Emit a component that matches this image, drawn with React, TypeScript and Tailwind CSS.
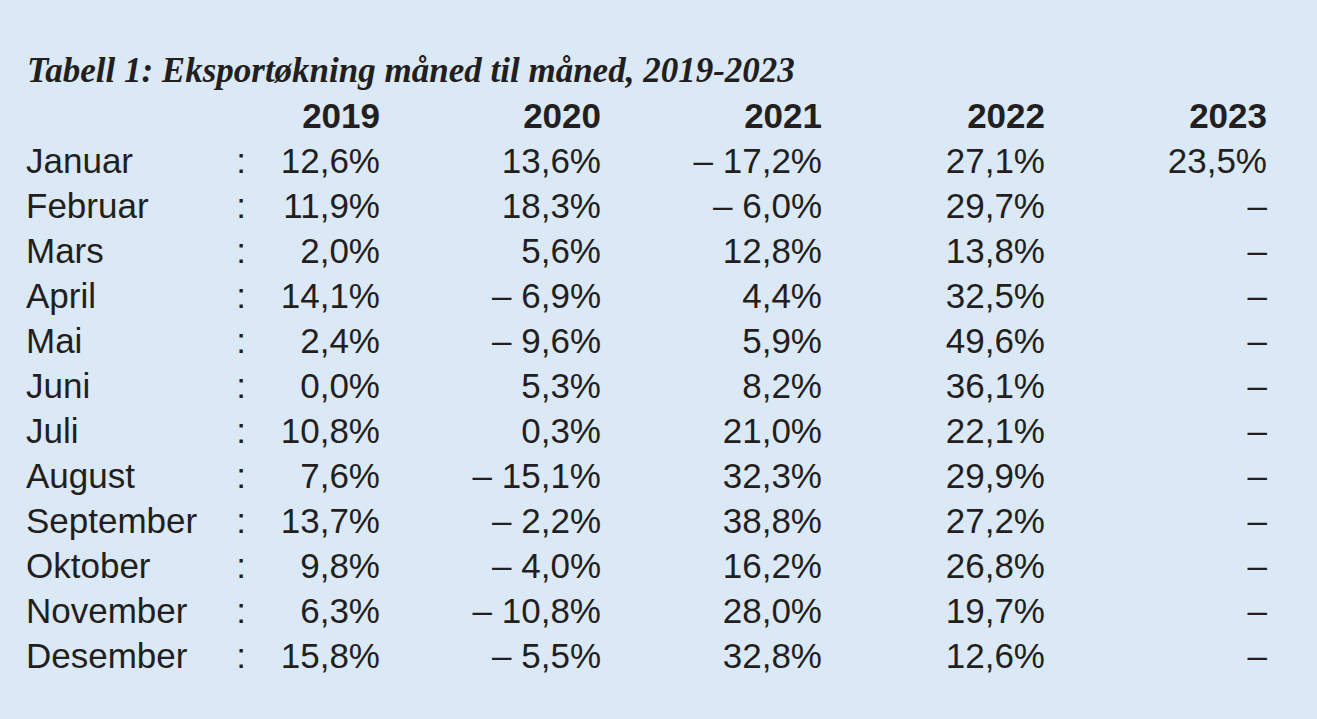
import React from "react";

const rows: [string, string, string, string, string, string][] = [
  ["Januar", "12,6%", "13,6%", "– 17,2%", "27,1%", "23,5%"],
  ["Februar", "11,9%", "18,3%", "– 6,0%", "29,7%", "–"],
  ["Mars", "2,0%", "5,6%", "12,8%", "13,8%", "–"],
  ["April", "14,1%", "– 6,9%", "4,4%", "32,5%", "–"],
  ["Mai", "2,4%", "– 9,6%", "5,9%", "49,6%", "–"],
  ["Juni", "0,0%", "5,3%", "8,2%", "36,1%", "–"],
  ["Juli", "10,8%", "0,3%", "21,0%", "22,1%", "–"],
  ["August", "7,6%", "– 15,1%", "32,3%", "29,9%", "–"],
  ["September", "13,7%", "– 2,2%", "38,8%", "27,2%", "–"],
  ["Oktober", "9,8%", "– 4,0%", "16,2%", "26,8%", "–"],
  ["November", "6,3%", "– 10,8%", "28,0%", "19,7%", "–"],
  ["Desember", "15,8%", "– 5,5%", "32,8%", "12,6%", "–"],
];

const grid =
  "grid grid-cols-[206px_18px_130px_221px_221px_223px_222px] leading-[45px]";

export default function App() {
  return (
    <div className="w-[1317px] h-[719px] bg-[#dbe8f5] text-[#231f20] pt-[48px] pl-[26px] overflow-hidden">
      <div className="font-['Liberation_Serif',serif] italic font-bold text-[35px] leading-[45px] pl-[1px]">
        Tabell 1: Eksportøkning måned til måned, 2019-2023
      </div>
      <div className="font-['Liberation_Sans',Arial,sans-serif] text-[35px]">
        <div className={grid + " font-bold"}>
          <div />
          <div />
          <div className="text-right">2019</div>
          <div className="text-right">2020</div>
          <div className="text-right">2021</div>
          <div className="text-right">2022</div>
          <div className="text-right">2023</div>
        </div>
        {rows.map((r) => (
          <div key={r[0]} className={grid}>
            <div>{r[0]}</div>
            <div className="text-center">:</div>
            <div className="text-right">{r[1]}</div>
            <div className="text-right">{r[2]}</div>
            <div className="text-right">{r[3]}</div>
            <div className="text-right">{r[4]}</div>
            <div className="text-right">{r[5]}</div>
          </div>
        ))}
      </div>
    </div>
  );
}
